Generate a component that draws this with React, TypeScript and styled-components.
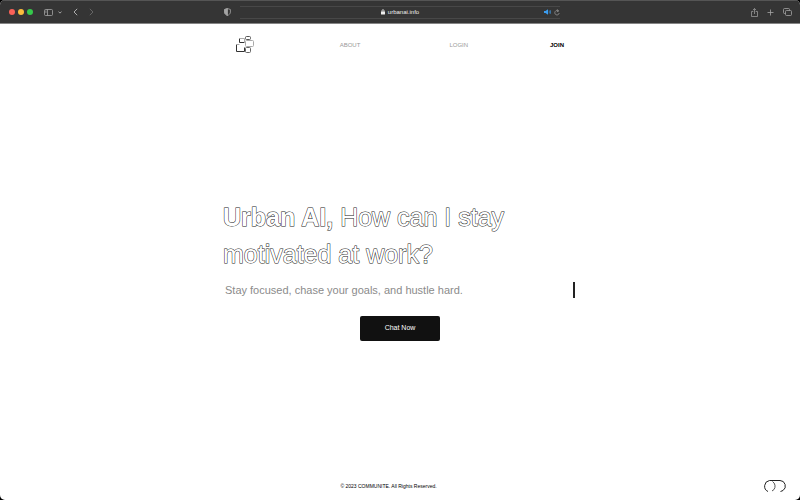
import React from "react";
import styled, { createGlobalStyle } from "styled-components";

const GlobalStyle = createGlobalStyle`
  *, *::before, *::after { box-sizing: border-box; }
  html { background: #000; }
  body { margin: 0; font-family: "Liberation Sans", Arial, Helvetica, sans-serif; }
`;

const Window = styled.div`
  min-height: 100vh;
  display: flex;
  flex-direction: column;
  background: #fff;
  border-radius: 5px;
  overflow: hidden;
`;

const Toolbar = styled.header`
  display: grid;
  grid-template-columns: 1fr 40% 1fr;
  align-items: center;
  height: 24px;
  flex: none;
  background: #353535;
  border-top: 1px solid #555;
  border-bottom: 1px solid #858585;
`;

const ToolGroup = styled.div<{ $gap: number }>`
  display: flex;
  align-items: center;
  gap: ${(p) => p.$gap}px;
`;

const LeftTools = styled.div`
  display: flex;
  align-items: center;
  justify-content: space-between;
  padding: 0 9px;
`;

const RightTools = styled(ToolGroup)`
  justify-content: flex-end;
  padding-right: 8px;
`;

const Light = styled.span<{ $color: string }>`
  width: 6px;
  height: 6px;
  border-radius: 50%;
  background: ${(p) => p.$color};
`;

const IconButton = styled.button<{ $color?: string }>`
  display: flex;
  padding: 0;
  border: 0;
  background: none;
  color: ${(p) => p.$color ?? "#a5a5a5"};
`;

const AddressBar = styled.div`
  display: grid;
  grid-template-columns: 1fr auto 1fr;
  align-items: center;
  height: 13px;
  border-top: 1px solid #484848;
  border-bottom: 1px solid #484848;
  color: #eee;
  font-size: 6px;
  line-height: 8px;
`;

const Address = styled.span`
  display: flex;
  align-items: center;
  gap: 3px;
  grid-column: 2;
`;

const AddressTools = styled(ToolGroup)`
  justify-content: flex-end;
`;

const Nav = styled.nav`
  display: grid;
  grid-template-columns: 34fr 36fr 33fr auto;
  align-items: center;
  justify-items: start;
  width: 41%;
  margin: 12px auto 0;
`;

const NavLink = styled.a<{ $strong?: boolean }>`
  display: block;
  color: ${(p) => (p.$strong ? "#000" : "#999")};
  font-size: 6px;
  line-height: 8px;
  font-weight: ${(p) => (p.$strong ? 700 : 400)};
  text-decoration: none;
`;

const Hero = styled.main`
  flex: 1;
  display: flex;
  flex-direction: column;
  justify-content: center;
  width: 354px;
  max-width: 100%;
  margin: 0 auto;
  padding-top: 6px;
`;

const Title = styled.h1`
  margin: 0;
  max-width: 320px;
  color: #fff;
  font-size: 25px;
  line-height: 37px;
  font-weight: 400;
  -webkit-text-stroke: 1px #222;
  paint-order: stroke fill;
`;

const Answer = styled.div`
  display: flex;
  align-items: center;
  justify-content: space-between;
  margin-top: 9px;
  padding-left: 2px;
  padding-right: 2px;
`;

const AnswerText = styled.p`
  margin: 0;
  color: #8b8b8b;
  font-size: 11px;
  line-height: 16px;
`;

const Caret = styled.span`
  width: 2px;
  height: 16px;
  background: #222;
`;

const ChatButton = styled.button`
  align-self: center;
  width: 80px;
  height: 25px;
  margin-top: 18px;
  padding: 0;
  border: 0;
  border-radius: 2px;
  background: #111;
  color: #fff;
  font: 7px/10px "Liberation Sans", Arial, sans-serif;
`;

const Footer = styled.footer`
  display: flex;
  align-items: center;
  padding: 0 14px 7px;
`;

const Copyright = styled.small`
  flex: 1;
  text-align: center;
  color: #000;
  font-size: 5px;
  line-height: 8px;
`;

const Toggle = styled.button`
  display: flex;
  padding: 0;
  border: 0;
  background: none;
`;

const Icon = ({ w, h, children }: { w: number; h: number; children: React.ReactNode }) => (
  <svg width={w} height={h} viewBox={`0 0 ${w} ${h}`} fill="none" stroke="currentColor" strokeWidth="0.8" aria-hidden="true">
    {children}
  </svg>
);

export default function App() {
  return (
    <>
      <GlobalStyle />
      <Window>
        <Toolbar>
          <LeftTools>
            <ToolGroup $gap={11}>
              <ToolGroup $gap={3}>
                <Light $color="#fa6158" />
                <Light $color="#fbbd3d" />
                <Light $color="#35c94b" />
              </ToolGroup>
              <ToolGroup $gap={11}>
                <ToolGroup $gap={5}>
                  <IconButton aria-label="Sidebar">
                    <Icon w={9} h={7}><rect x=".5" y=".5" width="8" height="6" rx="1" /><path d="M3.5 .5v6M1.3 2h1.2M1.3 3.2h1.2" /></Icon>
                  </IconButton>
                  <IconButton aria-label="Tab groups">
                    <Icon w={4} h={3}><path d="M.5 .7 2 2.1 3.5 .7" strokeWidth="1" /></Icon>
                  </IconButton>
                </ToolGroup>
                <ToolGroup $gap={11}>
                  <IconButton aria-label="Back" $color="#ccc">
                    <Icon w={5} h={8}><path d="M4.2 .8 1 4l3.2 3.2" /></Icon>
                  </IconButton>
                  <IconButton aria-label="Forward" $color="#747474">
                    <Icon w={5} h={8}><path d="M.8 .8 4 4 .8 7.2" /></Icon>
                  </IconButton>
                </ToolGroup>
              </ToolGroup>
            </ToolGroup>
            <IconButton aria-label="Privacy report">
              <Icon w={7} h={8}>
                <path d="M3.5 .5 6.4 1.5v2.6c0 1.6-1.2 2.7-2.9 3.4C1.8 6.8.6 5.7.6 4.1V1.5z" />
                <path d="M3.5 .5v7C1.8 6.8.6 5.7.6 4.1V1.5z" fill="currentColor" />
              </Icon>
            </IconButton>
          </LeftTools>
          <AddressBar>
            <Address>
              <Icon w={4} h={6}><path d="M1 3V1.7a1 1 0 0 1 2 0V3" /><rect y="2.5" width="4" height="3" rx=".5" fill="currentColor" stroke="none" /></Icon>
              urbanai.info
            </Address>
            <AddressTools $gap={3}>
              <IconButton aria-label="Mute tab" $color="#3b9df0">
                <Icon w={7} h={6}><path d="M0 2h1.5L4 .2v5.6L1.5 4H0z" fill="currentColor" stroke="none" /><path d="M5 1.7q.8 1.3 0 2.6M6.1 1q1.1 2 0 4" strokeWidth=".6" /></Icon>
              </IconButton>
              <IconButton aria-label="Reload">
                <Icon w={6} h={7}><path d="M4.6 2.2A2.2 2.2 0 1 0 5.2 4M2.8 .3 4.6 1.8 2.9 3" strokeWidth=".7" /></Icon>
              </IconButton>
            </AddressTools>
          </AddressBar>
          <RightTools $gap={9}>
            <IconButton aria-label="Share">
              <Icon w={7} h={9}><path d="M2.3 3.5H.5v5h6v-5H4.7M3.5 6V.6M1.9 2.1 3.5 .6l1.600 1.5" strokeWidth=".7" /></Icon>
            </IconButton>
            <IconButton aria-label="New tab">
              <Icon w={7} h={7}><path d="M3.5 .5v6M.5 3.5h6" /></Icon>
            </IconButton>
            <IconButton aria-label="Tab overview">
              <Icon w={9} h={8}><rect x="2.5" y="2.5" width="6" height="5" rx="1" /><path d="M2.5 5.5h-1a1 1 0 0 1-1-1v-3a1 1 0 0 1 1-1h4a1 1 0 0 1 1 1v1" /></Icon>
            </IconButton>
          </RightTools>
        </Toolbar>
        <Nav>
          <a href="#home" aria-label="Home">
            <svg width="18" height="18" viewBox="0 0 18 18" fill="none" stroke="#333" strokeWidth="1" aria-hidden="true" display="block">
              <path d="M.5 8.5v7h8v-4" />
              <path d="M3.5 2.5v4h5" />
              <path d="M3.5 2.5h5v4M.5 8.5h3" stroke="#aaa" />
              <rect x="9.5" y=".5" width="5" height="3" rx="1" stroke="#555" />
              <rect x="9.5" y="4.5" width="8" height="6" rx="1" stroke="#aaa" />
              <rect x="9.5" y="11.5" width="5" height="5" rx="1" stroke="#666" />
            </svg>
          </a>
          <NavLink href="#about">ABOUT</NavLink>
          <NavLink href="#login">LOGIN</NavLink>
          <NavLink href="#join" $strong>JOIN</NavLink>
        </Nav>
        <Hero>
          <Title><b>Urban AI,</b> How can I stay motivated at work?</Title>
          <Answer>
            <AnswerText>Stay focused, chase your goals, and hustle hard.</AnswerText>
            <Caret />
          </Answer>
          <ChatButton>Chat Now</ChatButton>
        </Hero>
        <Footer>
          <Copyright>© 2023 COMMUNITE. All Rights Reserved.</Copyright>
          <Toggle aria-label="Toggle theme">
            <svg width="23" height="14" viewBox="0 0 23 14" fill="none" stroke="#222" strokeWidth="1" aria-hidden="true">
              <path d="M5 12.5A5.8 5.8 0 0 1 6.5 1.5H17a5.5 5.5 0 0 1 3 10l-2.5 1" />
              <path d="M9.5 2.500a5.6 5.6 0 0 1 1.500 8L9 12" stroke="#555" />
            </svg>
          </Toggle>
        </Footer>
      </Window>
    </>
  );
}
